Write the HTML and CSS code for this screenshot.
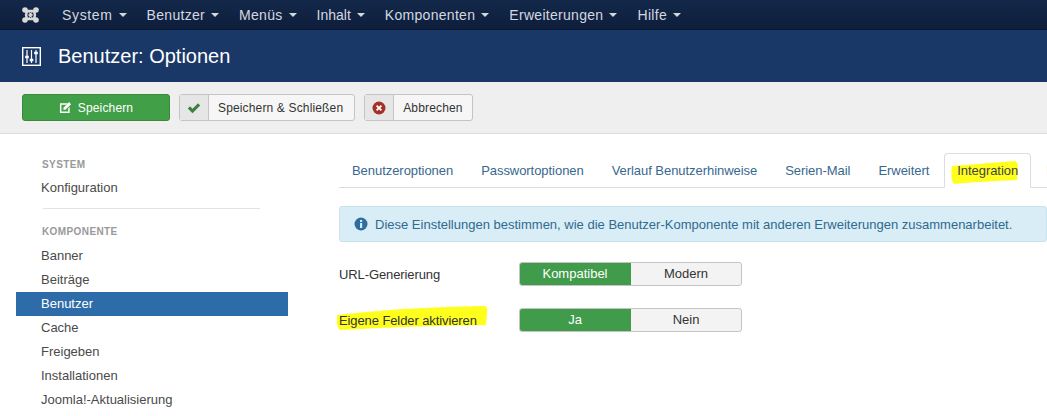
FILE: index.html
```html
<!DOCTYPE html>
<html lang="de">
<head>
<meta charset="utf-8">
<title>Benutzer: Optionen</title>
<link rel="stylesheet" href="styles.css">
</head>
<body>
<nav class="navbar">
  <svg class="logo" viewBox="0 0 17 16" width="17" height="16"><g fill="none" stroke="#d9d9d9" stroke-width="3"><path d="M3 3 L14 13 M14 3 L3 13"/><path d="M5 4 L12 4 L13 8 L12 12 L5 12 L4 8 Z" stroke-width="2.4"/></g><circle cx="3" cy="3" r="2.8" fill="#d9d9d9"/><circle cx="14" cy="3" r="2.8" fill="#d9d9d9"/><circle cx="3" cy="13" r="2.8" fill="#d9d9d9"/><circle cx="14" cy="13" r="2.8" fill="#d9d9d9"/><circle cx="6.5" cy="6.5" r=".9" fill="#132647"/><circle cx="10.5" cy="6.5" r=".9" fill="#132647"/><circle cx="6.5" cy="9.5" r=".9" fill="#132647"/><circle cx="10.5" cy="9.5" r=".9" fill="#132647"/></svg>
  <ul class="menu">
    <li>System<i class="caret"></i></li>
    <li>Benutzer<i class="caret"></i></li>
    <li>Menüs<i class="caret"></i></li>
    <li>Inhalt<i class="caret"></i></li>
    <li>Komponenten<i class="caret"></i></li>
    <li>Erweiterungen<i class="caret"></i></li>
    <li>Hilfe<i class="caret"></i></li>
  </ul>
</nav>
<header class="title-bar">
  <svg class="title-icon" viewBox="0 0 19 19" width="19" height="19"><rect x=".7" y=".7" width="17.6" height="17.6" fill="none" stroke="#fff" stroke-width="1.4"/><path d="M5 3v13M9.500 3v13M14 3v13" stroke="#fff" stroke-width="1.2"/><path d="M3.200 10h3.600M7.700 13h3.600M12.200 6h3.600" stroke="#fff" stroke-width="2.400"/></svg>
  <h1>Benutzer: Optionen</h1>
</header>
<div class="toolbar">
  <button class="btn btn-save"><svg viewBox="0 0 14 14" width="13" height="13"><path d="M1 2.500h8.500l-1.600 1.600H2.600v7.300h7.300V8l1.600-1.600V13H1z" fill="#fff"/><path d="M4.800 7.200 10.800 1.200l2.200 2.200L7 9.400H4.800z" fill="#fff"/></svg>Speichern</button>
  <button class="btn btn-split"><span class="ico"><svg viewBox="0 0 14 14" width="14" height="14"><path d="M.8 7.500 3 5.300 5.500 7.800 11 2.300l2.200 2.200L5.500 12.200z" fill="#3f7f3f"/></svg></span><span class="lbl">Speichern &amp; Schließen</span></button>
  <button class="btn btn-split"><span class="ico"><svg viewBox="0 0 14 14" width="14" height="14"><circle cx="7" cy="7" r="6.500" fill="#a5302a"/><path d="M4.600 4.600l4.800 4.800M9.400 4.600l-4.800 4.800" stroke="#fff" stroke-width="1.800"/></svg></span><span class="lbl lbl-short">Abbrechen</span></button>
</div>
<main class="layout">
  <aside class="sidebar">
    <h2 class="side-head">SYSTEM</h2>
    <a class="side-link">Konfiguration</a>
    <hr class="side-rule">
    <h2 class="side-head side-head-2">KOMPONENTE</h2>
    <a class="side-link">Banner</a>
    <a class="side-link">Beiträge</a>
    <a class="side-link active">Benutzer</a>
    <a class="side-link">Cache</a>
    <a class="side-link">Freigeben</a>
    <a class="side-link">Installationen</a>
    <a class="side-link">Joomla!-Aktualisierung</a>
  </aside>
  <section class="content">
    <ul class="tabs">
      <li>Benutzeroptionen</li>
      <li>Passwortoptionen</li>
      <li>Verlauf Benutzerhinweise</li>
      <li>Serien-Mail</li>
      <li>Erweitert</li>
      <li class="active"><svg class="marker marker-tab" viewBox="0 0 72 26"><path d="M3 6 C25 4 45 3 66 1 Q69 2 69 7 L68 20 C45 21 25 22 5 24 Q1 20 3 6Z" fill="#ffff1e"/></svg><span class="over">Integration</span></li>
      <li>Berechtigungen</li>
    </ul>
    <div class="alert"><svg viewBox="0 0 14 14" width="14" height="14"><circle cx="7" cy="7" r="6.500" fill="#2f6f9f"/><rect x="6" y="6" width="2.200" height="5" fill="#d9edf7"/><rect x="6" y="3" width="2.200" height="2" fill="#d9edf7"/></svg>Diese Einstellungen bestimmen, wie die Benutzer-Komponente mit anderen Erweiterungen zusammenarbeitet.</div>
    <div class="field">
      <label class="field-label">URL-Generierung</label>
      <div class="switch"><span class="on">Kompatibel</span><span class="off">Modern</span></div>
    </div>
    <div class="field">
      <label class="field-label"><svg class="marker marker-field" viewBox="0 0 155 30"><path d="M2 10 C30 7 60 4 90 3 C110 2 130 1 150 1 Q153 2 152 8 L151 20 C100 21 60 22 5 25 Q1 22 2 10Z" fill="#ffff1e"/></svg><span class="over">Eigene Felder aktivieren</span></label>
      <div class="switch"><span class="on">Ja</span><span class="off">Nein</span></div>
    </div>
  </section>
</main>
</body>
</html>
```

FILE: styles.css
```css
* { box-sizing: border-box; }
html, body { margin: 0; padding: 0; width: 1047px; height: 416px; overflow: hidden; background: #fff; font-family: "Liberation Sans", Arial, sans-serif; font-size: 13px; color: #333; }

.navbar { height: 30px; background: linear-gradient(#13284a, #0e1e3b); border-bottom: 1px solid #0a1730; display: flex; align-items: center; padding-left: 22px; }
.logo { flex: none; }
.menu { list-style: none; margin: 0 0 0 23px; padding: 0; display: flex; gap: 20px; color: #d3d8e0; font-size: 14px; letter-spacing: .3px; }
.menu li { display: flex; align-items: center; white-space: nowrap; }
.menu li:first-child { letter-spacing: .65px; }
.menu li:nth-child(4) { letter-spacing: 0; }
.caret { width: 0; height: 0; margin-left: 6px; border-left: 4px solid transparent; border-right: 4px solid transparent; border-top: 4px solid #d3d8e0; }

.title-bar { height: 52px; background: #1a3867; display: flex; align-items: center; padding-left: 22px; color: #fff; }
.title-bar h1 { margin: 0 0 0 17px; font-size: 20px; font-weight: 400; }
.title-icon { flex: none; }

.toolbar { height: 52px; background: #efefef; border-bottom: 1px solid #dcdcdc; display: flex; align-items: center; padding: 0 0 0 22px; gap: 9px; }
.btn { height: 27px; padding: 0; border-radius: 3px; font: 12px "Liberation Sans", Arial, sans-serif; letter-spacing: .15px; display: flex; align-items: center; }
.btn-save { width: 148px; justify-content: center; gap: 6px; background: #41a047; border: 1px solid #358a3b; color: #fff; }
.btn-split { background: #f6f6f6; border: 1px solid #c4c4c4; color: #333; }
.ico { width: 29px; height: 100%; background: #e6e6e6; border-right: 1px solid #c4c4c4; display: flex; align-items: center; justify-content: center; }
.lbl { padding: 0 11px 0 9px; }
.lbl-short { padding-right: 9px; }

.layout { display: flex; align-items: flex-start; }
.sidebar { width: 272px; margin: 21px 0 0 16px; flex: none; }
.side-head { margin: 0; padding: 4px 0 0 26px; height: 21px; font-size: 10px; font-weight: 700; color: #999; letter-spacing: .4px; line-height: 12px; }
.side-head-2 { height: 22px; }
.side-link { display: block; height: 24px; line-height: 24px; padding-left: 25px; color: #4a4a4a; font-size: 13px; }
.side-link.active { background: #2d6ca8; color: #fff; }
.side-rule { margin: 8px 28px 13px 27px; border: 0; border-top: 1px solid #e2e2e2; }

.content { margin: 19px 0 0 51px; width: 708px; flex: none; }
.tabs { list-style: none; margin: 0; padding: 0; height: 35px; display: flex; border-bottom: 1px solid #ddd; color: #38678f; font-size: 13px; letter-spacing: -.05px; }
.tabs li { position: relative; flex: none; height: 35px; padding: 0 12px; margin-right: 2px; border: 1px solid transparent; line-height: 33px; white-space: nowrap; }
.tabs li.active { background: #fff; border-color: #ddd #ddd #fff; border-radius: 4px 4px 0 0; color: #444; }
.over { position: relative; }
.marker { position: absolute; }
.marker-tab { left: 4px; top: 6px; width: 72px; height: 26px; }
.marker-field { left: -4px; top: -8px; width: 155px; height: 30px; }

.alert { margin-top: 18px; height: 36px; background: #d9edf7; border: 1px solid #c6e3ef; border-radius: 3px; color: #2f6a8f; display: flex; align-items: center; padding-left: 14px; gap: 7px; font-size: 13px; white-space: nowrap; }

.field { display: flex; align-items: center; height: 24px; margin-top: 20px; }
.field + .field { margin-top: 22px; }
.field-label { position: relative; width: 180px; font-size: 13px; letter-spacing: -.1px; color: #333; white-space: nowrap; }
.switch { display: flex; height: 24px; width: 223px; font-size: 13px; text-align: center; line-height: 22px; background: #f3f3f3; border: 1px solid #c4c4c4; border-radius: 3px; overflow: hidden; }
.switch .off { flex: 1; }
.switch .on { flex: none; width: 112px; background: #409b4b; color: #fff; margin: -1px 0 -1px -1px; line-height: 24px; }
```
